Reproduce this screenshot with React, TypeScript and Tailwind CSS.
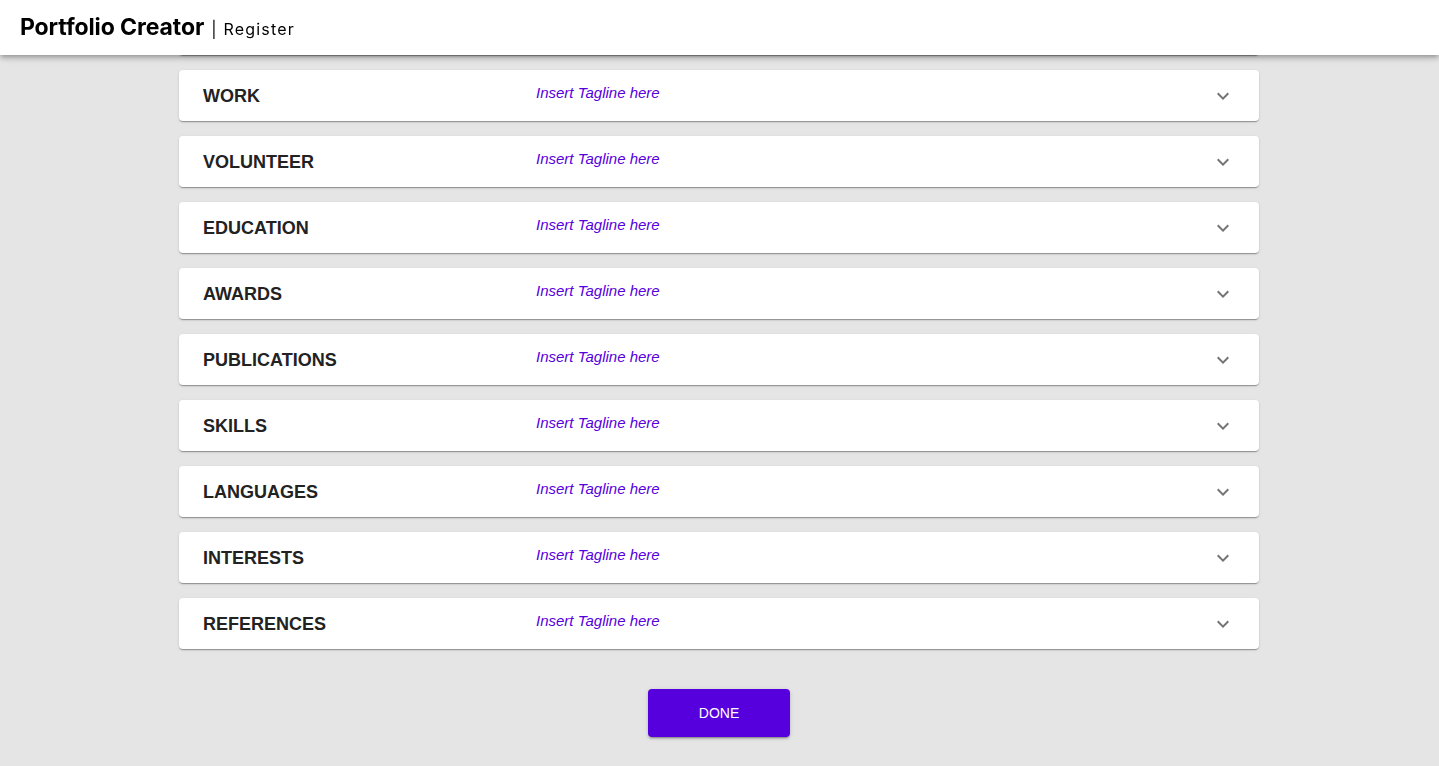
const sections = [
  'WORK',
  'VOLUNTEER',
  'EDUCATION',
  'AWARDS',
  'PUBLICATIONS',
  'SKILLS',
  'LANGUAGES',
  'INTERESTS',
  'REFERENCES',
];

function ExpandMore() {
  return (
    <svg viewBox="0 0 24 24" className="h-6 w-6 fill-[#757575]">
      <path d="M16.59 8.59 12 13.17 7.41 8.59 6 10l6 6 6-6z" />
    </svg>
  );
}

const cardShadow =
  'shadow-[0_2px_1px_-1px_rgba(0,0,0,0.2),0_1px_1px_0_rgba(0,0,0,0.14),0_1px_3px_0_rgba(0,0,0,0.12)]';

function SectionCard({ title }: { title: string }) {
  return (
    <div className={`flex h-[51px] items-start rounded-[4px] bg-white pl-6 pr-[24px] ${cardShadow}`}>
      <div className="flex h-full w-[333px] shrink-0 items-center pt-[2px] text-[18px] font-bold text-[#222222]">
        {title}
      </div>
      <div className="pt-[13px] text-[15px] italic leading-[20px] text-[#5500dd]">Insert Tagline here</div>
      <div className="ml-auto flex h-full items-center">
        <ExpandMore />
      </div>
    </div>
  );
}

export default function App() {
  return (
    <div className="min-h-[766px] bg-[#e5e5e5] font-['Liberation_Sans',Arial,sans-serif]">
      {/* Top bar sits over the scrolled list */}
      <header className="fixed inset-x-0 top-0 z-10 flex h-[55px] items-center gap-[7px] bg-white px-5 shadow-[0_2px_4px_-1px_rgba(0,0,0,0.2),0_4px_5px_0_rgba(0,0,0,0.14),0_1px_10px_0_rgba(0,0,0,0.12)]">
        <span className="font-['Inter',sans-serif] text-[23px] font-bold leading-none tracking-[-0.1px] text-black">
          Portfolio Creator
        </span>
        <span className="mt-[3px] font-['Inter',sans-serif] text-[16px] leading-none tracking-[1.2px] text-black">
          | Register
        </span>
      </header>

      <main className="ml-[179px] flex w-[1080px] flex-col gap-[15px] pt-[4px]">
        {/* previous section, scrolled under the top bar */}
        <div className={`h-[51px] rounded-[4px] bg-white ${cardShadow}`} />
        {sections.map((s) => (
          <SectionCard key={s} title={s} />
        ))}
        <div className="flex justify-center pt-[25px] pb-[29px]">
          <button className="h-[48px] w-[142px] rounded-[4px] bg-[#5500dd] text-[14px] text-white shadow-[0_3px_1px_-2px_rgba(0,0,0,0.2),0_2px_2px_0_rgba(0,0,0,0.14),0_1px_5px_0_rgba(0,0,0,0.12)]">
            DONE
          </button>
        </div>
      </main>
    </div>
  );
}
